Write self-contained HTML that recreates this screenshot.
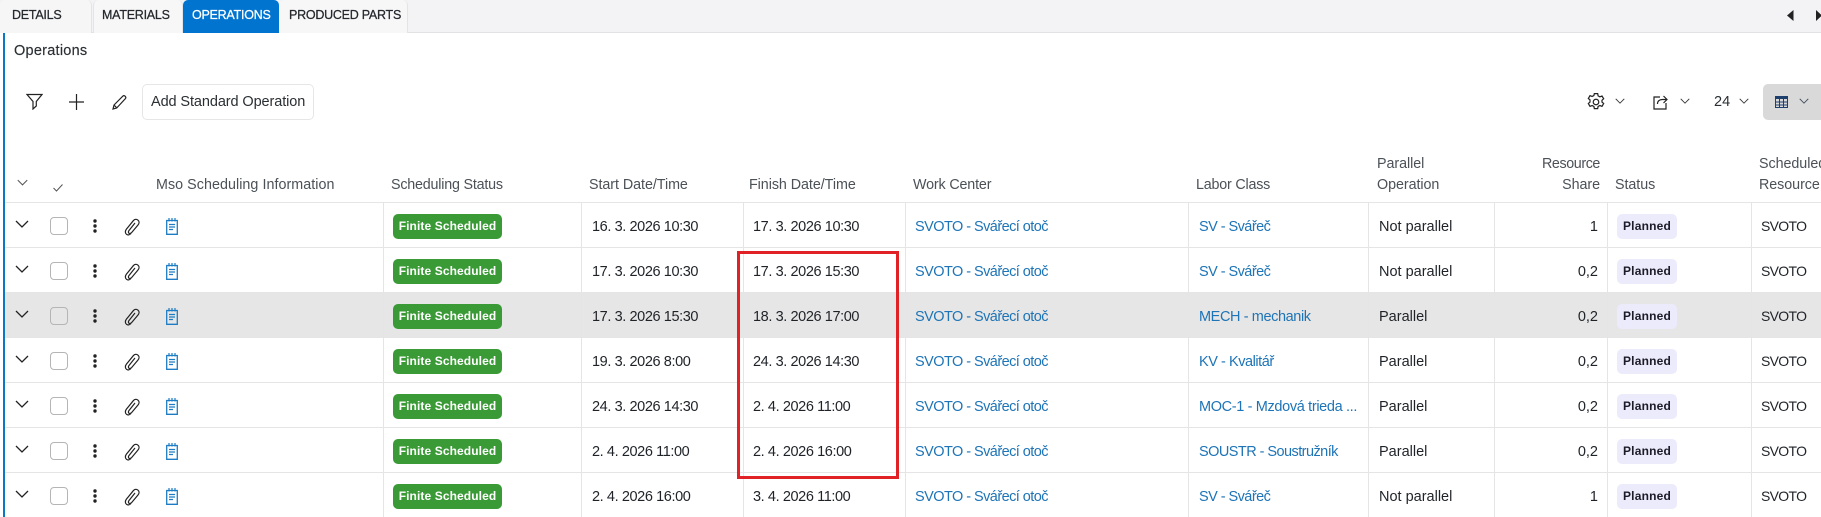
<!DOCTYPE html>
<html><head><meta charset="utf-8"><style>
html,body{margin:0;padding:0;background:#fff}
#p{position:relative;width:1821px;height:517px;overflow:hidden;background:#fff;font-family:"Liberation Sans",sans-serif;font-size:14.5px;color:#1f2328}
#p div,#p span,#p svg{position:absolute}
#p span{white-space:nowrap}
.strip{left:0;top:0;width:1821px;height:33px;background:#f3f3f5;border-bottom:1px solid #e2e2e4;box-sizing:border-box}
.tab{top:0;height:33px;background:#f7f7f8;border-right:1px solid #e4e4e6;border-radius:5px 5px 0 0;box-sizing:border-box}
.tt{top:6px;font-size:12.5px;line-height:18px;color:#24282c;letter-spacing:-.25px;-webkit-text-stroke:.25px}
.h{line-height:20px;color:#4b5157;font-size:14.3px;letter-spacing:-.05px;margin-top:1px}
.r{left:5px;width:1816px;height:45px;border-bottom:1px solid #e5e5e5;box-sizing:border-box}
.r.g{background:#e6e6e6}
.v{width:1px;background:#e5e5e5;top:203px;height:314px}
.t{top:203px;line-height:48px;letter-spacing:-.4px}
.n{letter-spacing:0}
.s{font-size:14px;letter-spacing:-.7px;margin-top:-1px}
.a{color:#1d74b7;letter-spacing:-.55px}
.b1{left:393px;width:109px;height:25px;background:#3a9a36;border-radius:5px;color:#fff;font-size:12px;font-weight:bold;line-height:24px;text-align:center;letter-spacing:.1px}
.b2{left:1617px;width:60px;height:25px;background:#ecebfb;border-radius:5px;color:#1c1c28;font-size:12px;font-weight:bold;line-height:24px;text-align:center;letter-spacing:.2px}
.cb{left:50px;width:18px;height:18px;border:1px solid #b5b5b5;border-radius:4px;box-sizing:border-box;background:#fff}
</style></head><body><div id="p">
<svg width="0" height="0" style="left:0;top:0"><defs>
<symbol id="chev" viewBox="0 0 14 8"><path d="M1 1l6 6 6-6" fill="none" stroke="currentColor" stroke-width="1.3"/></symbol>
<symbol id="clip" viewBox="0 0 16 18"><path d="M11 5L5 12.500c-1 1.300-.6 2.300 0 2.700s1.700.4 2.800-.8L14 7c1.500-1.800 1.300-3.700 0-4.800s-3.200-1.200-4.700.5L2.500 11c-1.700 2.200-1.300 4.300 0 5.300s3 .7 4.500-.8" fill="none" stroke="#222" stroke-width="1.200"/></symbol>
<symbol id="note" viewBox="0 0 12 17"><path d="M.7 2.500h10.600v13.800H.7z" fill="none" stroke="#1d7cc4" stroke-width="1.300"/><path d="M3 0v3.500M6 0v3.500M9 0v3.500" stroke="#1d7cc4" stroke-width="1.200"/><path d="M3 6.500h6M3 9h6M3 11.500h4" stroke="#1d7cc4" stroke-width="1.200"/></symbol>
<symbol id="dots" viewBox="0 0 4 14"><circle cx="2" cy="2" r="1.700" fill="#222"/><circle cx="2" cy="7" r="1.700" fill="#222"/><circle cx="2" cy="12" r="1.700" fill="#222"/></symbol>
</defs></svg>

<div class="strip"></div>
<div class="tab" style="left:0;width:92px;background:#f6f6f7"></div>
<div class="tab" style="left:93px;width:90px;border-left:1px solid #e4e4e6"></div>
<div class="tab" style="left:183px;width:96px;background:#0074cf;border:0"></div>
<div class="tab" style="left:279px;width:129px"></div>
<span class="tt" style="left:12px">DETAILS</span>
<span class="tt" style="left:102px">MATERIALS</span>
<span class="tt" style="left:192px;color:#fff">OPERATIONS</span>
<span class="tt" style="left:289px">PRODUCED PARTS</span>
<svg style="left:1787px;top:10px" width="8" height="11"><path d="M6.500 0v11L0 5.500z" fill="#222"/></svg>
<svg style="left:1816px;top:10px" width="5" height="11"><path d="M0 0v11l6-5.500z" fill="#222"/></svg>

<div style="left:3px;top:33px;width:2px;height:484px;background:#0a78c2"></div>
<span style="left:14px;top:41px;line-height:20px;color:#2a2f33;letter-spacing:.25px;-webkit-text-stroke:.15px">Operations</span>

<svg style="left:26px;top:93px" width="17" height="17"><path d="M1 1.500h15L10.300 8.500v4.500L7 16V8.500z" fill="none" stroke="#222" stroke-width="1.200"/></svg>
<svg style="left:69px;top:94px" width="15" height="16"><path d="M7.500 0v16M0 8h15" stroke="#222" stroke-width="1.200"/></svg>
<svg style="left:112px;top:95px" width="15" height="15"><path d="M1 14l1-4L11 1c.8-.6 1.500-.4 2.200.3s.9 1.400.3 2.200L4.700 13zM2 10l3 3" fill="none" stroke="#222" stroke-width="1.200"/></svg>
<div style="left:142px;top:84px;width:172px;height:36px;border:1px solid #e6e6e6;border-radius:5px;box-sizing:border-box"></div>
<span style="left:151px;top:92px;line-height:20px;color:#2a2f33;letter-spacing:-.1px">Add Standard Operation</span>

<svg style="left:1586px;top:92px" width="20" height="20" viewBox="0 0 18 17"><circle cx="9" cy="8.500" r="2.500" fill="none" stroke="#222" stroke-width="1.100"/><path d="M7.500 1h3l.4 2 1.600.8 1.900-.7 1.500 2.500-1.500 1.300v1.700l1.500 1.300-1.500 2.500-1.900-.7-1.600.8-.4 2h-3l-.4-2-1.600-.8-1.900.7-1.500-2.500 1.500-1.300V6.600L2.100 5.300l1.500-2.500 1.900.7 1.600-.8z" fill="none" stroke="#222" stroke-width="1.100"/></svg>
<svg style="left:1615px;top:98px;color:#333" width="10" height="6"><use href="#chev"/></svg>
<svg style="left:1653px;top:94px" width="15" height="16"><path d="M7 3H1v12h12V9M4.500 10c0-3 2-4.500 5-4.500h4M10.500 2l3.500 3.500L10.500 9" fill="none" stroke="#222" stroke-width="1.200"/></svg>
<svg style="left:1680px;top:98px;color:#333" width="10" height="6"><use href="#chev"/></svg>
<span style="left:1714px;top:92px;line-height:20px;color:#2a2f33">24</span>
<svg style="left:1739px;top:98px;color:#333" width="10" height="6"><use href="#chev"/></svg>
<div style="left:1763px;top:84px;width:58px;height:36px;background:#d9d9d9;border-radius:5px 0 0 5px"></div>
<svg style="left:1775px;top:96px" width="13" height="12"><path d="M0 0h13v3H0z" fill="#1d3f6e"/><path d="M.5 3v8.500h12V3M4.500 3v8.500M8.500 3v8.500M.5 6h12M.5 9h12" fill="none" stroke="#1d3f6e"/></svg>
<svg style="left:1799px;top:98px;color:#3c4a5c" width="10" height="6"><use href="#chev"/></svg>

<svg style="left:17px;top:179px;color:#555" width="11" height="7"><use href="#chev"/></svg>
<svg style="left:53px;top:184px" width="10" height="8"><path d="M.5 4l3 3L9.500.5" fill="none" stroke="#555"/></svg>
<span class="h" style="left:156px;top:174px;letter-spacing:.05px">Mso Scheduling Information</span>
<span class="h" style="left:391px;top:174px;letter-spacing:-.2px">Scheduling Status</span>
<span class="h" style="left:589px;top:174px">Start Date/Time</span>
<span class="h" style="left:749px;top:174px">Finish Date/Time</span>
<span class="h" style="left:913px;top:174px;letter-spacing:-.15px">Work Center</span>
<span class="h" style="left:1196px;top:174px;letter-spacing:-.2px">Labor Class</span>
<span class="h" style="left:1377px;top:153px">Parallel</span>
<span class="h" style="left:1377px;top:174px">Operation</span>
<span class="h" style="right:221px;top:153px;letter-spacing:-.4px">Resource</span>
<span class="h" style="right:221px;top:174px">Share</span>
<span class="h" style="left:1615px;top:174px">Status</span>
<span class="h" style="left:1759px;top:153px">Scheduled</span>
<span class="h" style="left:1759px;top:174px">Resource</span>

<div class="r" style="top:158px"></div>
<div class="r" style="top:203px"></div>
<div class="r" style="top:248px"></div>
<div class="r g" style="top:293px"></div>
<div class="r" style="top:338px"></div>
<div class="r" style="top:383px"></div>
<div class="r" style="top:428px"></div>
<div class="r" style="top:473px;border:0"></div>

<div class="v" style="left:383px"></div><div class="v" style="left:581px"></div><div class="v" style="left:743px"></div><div class="v" style="left:905px"></div><div class="v" style="left:1188px"></div><div class="v" style="left:1368px"></div><div class="v" style="left:1494px"></div><div class="v" style="left:1607px"></div><div class="v" style="left:1751px"></div>

<!-- row icons -->
<svg style="left:15px;top:220px;color:#222" width="14" height="8"><use href="#chev"/></svg>
<svg style="left:15px;top:265px;color:#222" width="14" height="8"><use href="#chev"/></svg>
<svg style="left:15px;top:310px;color:#222" width="14" height="8"><use href="#chev"/></svg>
<svg style="left:15px;top:355px;color:#222" width="14" height="8"><use href="#chev"/></svg>
<svg style="left:15px;top:400px;color:#222" width="14" height="8"><use href="#chev"/></svg>
<svg style="left:15px;top:445px;color:#222" width="14" height="8"><use href="#chev"/></svg>
<svg style="left:15px;top:490px;color:#222" width="14" height="8"><use href="#chev"/></svg>
<div class="cb" style="top:217px"></div><div class="cb" style="top:262px"></div><div class="cb" style="top:307px;background:#e6e6e6"></div><div class="cb" style="top:352px"></div><div class="cb" style="top:397px"></div><div class="cb" style="top:442px"></div><div class="cb" style="top:487px"></div>
<svg style="left:93px;top:219px" width="4" height="14"><use href="#dots"/></svg>
<svg style="left:93px;top:264px" width="4" height="14"><use href="#dots"/></svg>
<svg style="left:93px;top:309px" width="4" height="14"><use href="#dots"/></svg>
<svg style="left:93px;top:354px" width="4" height="14"><use href="#dots"/></svg>
<svg style="left:93px;top:399px" width="4" height="14"><use href="#dots"/></svg>
<svg style="left:93px;top:444px" width="4" height="14"><use href="#dots"/></svg>
<svg style="left:93px;top:489px" width="4" height="14"><use href="#dots"/></svg>
<svg style="left:124px;top:218px" width="16" height="18"><use href="#clip"/></svg>
<svg style="left:124px;top:263px" width="16" height="18"><use href="#clip"/></svg>
<svg style="left:124px;top:308px" width="16" height="18"><use href="#clip"/></svg>
<svg style="left:124px;top:353px" width="16" height="18"><use href="#clip"/></svg>
<svg style="left:124px;top:398px" width="16" height="18"><use href="#clip"/></svg>
<svg style="left:124px;top:443px" width="16" height="18"><use href="#clip"/></svg>
<svg style="left:124px;top:488px" width="16" height="18"><use href="#clip"/></svg>
<svg style="left:166px;top:218px" width="12" height="17"><use href="#note"/></svg>
<svg style="left:166px;top:263px" width="12" height="17"><use href="#note"/></svg>
<svg style="left:166px;top:308px" width="12" height="17"><use href="#note"/></svg>
<svg style="left:166px;top:353px" width="12" height="17"><use href="#note"/></svg>
<svg style="left:166px;top:398px" width="12" height="17"><use href="#note"/></svg>
<svg style="left:166px;top:443px" width="12" height="17"><use href="#note"/></svg>
<svg style="left:166px;top:488px" width="12" height="17"><use href="#note"/></svg>

<!-- badges -->
<div class="b1" style="top:214px">Finite Scheduled</div><div class="b1" style="top:259px">Finite Scheduled</div><div class="b1" style="top:304px">Finite Scheduled</div><div class="b1" style="top:349px">Finite Scheduled</div><div class="b1" style="top:394px">Finite Scheduled</div><div class="b1" style="top:439px">Finite Scheduled</div><div class="b1" style="top:484px">Finite Scheduled</div>
<div class="b2" style="top:214px">Planned</div><div class="b2" style="top:259px">Planned</div><div class="b2" style="top:304px">Planned</div><div class="b2" style="top:349px">Planned</div><div class="b2" style="top:394px">Planned</div><div class="b2" style="top:439px">Planned</div><div class="b2" style="top:484px">Planned</div>

<!-- start -->
<span class="t" style="left:592px">16. 3. 2026 10:30</span>
<span class="t" style="left:592px;top:248px">17. 3. 2026 10:30</span>
<span class="t" style="left:592px;top:293px">17. 3. 2026 15:30</span>
<span class="t" style="left:592px;top:338px">19. 3. 2026 8:00</span>
<span class="t" style="left:592px;top:383px">24. 3. 2026 14:30</span>
<span class="t" style="left:592px;top:428px">2. 4. 2026 11:00</span>
<span class="t" style="left:592px;top:473px">2. 4. 2026 16:00</span>
<!-- finish -->
<span class="t" style="left:753px">17. 3. 2026 10:30</span>
<span class="t" style="left:753px;top:248px">17. 3. 2026 15:30</span>
<span class="t" style="left:753px;top:293px">18. 3. 2026 17:00</span>
<span class="t" style="left:753px;top:338px">24. 3. 2026 14:30</span>
<span class="t" style="left:753px;top:383px">2. 4. 2026 11:00</span>
<span class="t" style="left:753px;top:428px">2. 4. 2026 16:00</span>
<span class="t" style="left:753px;top:473px">3. 4. 2026 11:00</span>
<!-- work center -->
<span class="t a" style="left:915px">SVOTO - Svářecí otoč</span>
<span class="t a" style="left:915px;top:248px">SVOTO - Svářecí otoč</span>
<span class="t a" style="left:915px;top:293px">SVOTO - Svářecí otoč</span>
<span class="t a" style="left:915px;top:338px">SVOTO - Svářecí otoč</span>
<span class="t a" style="left:915px;top:383px">SVOTO - Svářecí otoč</span>
<span class="t a" style="left:915px;top:428px">SVOTO - Svářecí otoč</span>
<span class="t a" style="left:915px;top:473px">SVOTO - Svářecí otoč</span>
<!-- labor -->
<span class="t a" style="left:1199px">SV - Svářeč</span>
<span class="t a" style="left:1199px;top:248px">SV - Svářeč</span>
<span class="t a" style="left:1199px;top:293px;letter-spacing:-.4px">MECH - mechanik</span>
<span class="t a" style="left:1199px;top:338px;letter-spacing:-.45px">KV - Kvalitář</span>
<span class="t a" style="left:1199px;top:383px;letter-spacing:-.35px">MOC-1 - Mzdová trieda ...</span>
<span class="t a" style="left:1199px;top:428px">SOUSTR - Soustružník</span>
<span class="t a" style="left:1199px;top:473px">SV - Svářeč</span>
<!-- parallel -->
<span class="t n" style="left:1379px">Not parallel</span>
<span class="t n" style="left:1379px;top:248px">Not parallel</span>
<span class="t n" style="left:1379px;top:293px">Parallel</span>
<span class="t n" style="left:1379px;top:338px">Parallel</span>
<span class="t n" style="left:1379px;top:383px">Parallel</span>
<span class="t n" style="left:1379px;top:428px">Parallel</span>
<span class="t n" style="left:1379px;top:473px">Not parallel</span>
<!-- share -->
<span class="t n" style="right:223px">1</span>
<span class="t n" style="right:223px;top:248px">0,2</span>
<span class="t n" style="right:223px;top:293px">0,2</span>
<span class="t n" style="right:223px;top:338px">0,2</span>
<span class="t n" style="right:223px;top:383px">0,2</span>
<span class="t n" style="right:223px;top:428px">0,2</span>
<span class="t n" style="right:223px;top:473px">1</span>
<!-- resource -->
<span class="t s" style="left:1761px">SVOTO</span>
<span class="t s" style="left:1761px;top:248px">SVOTO</span>
<span class="t s" style="left:1761px;top:293px">SVOTO</span>
<span class="t s" style="left:1761px;top:338px">SVOTO</span>
<span class="t s" style="left:1761px;top:383px">SVOTO</span>
<span class="t s" style="left:1761px;top:428px">SVOTO</span>
<span class="t s" style="left:1761px;top:473px">SVOTO</span>

<div style="left:737px;top:251px;width:162px;height:228px;border:3.500px solid #e02226;box-sizing:border-box"></div>
</div></body></html>
